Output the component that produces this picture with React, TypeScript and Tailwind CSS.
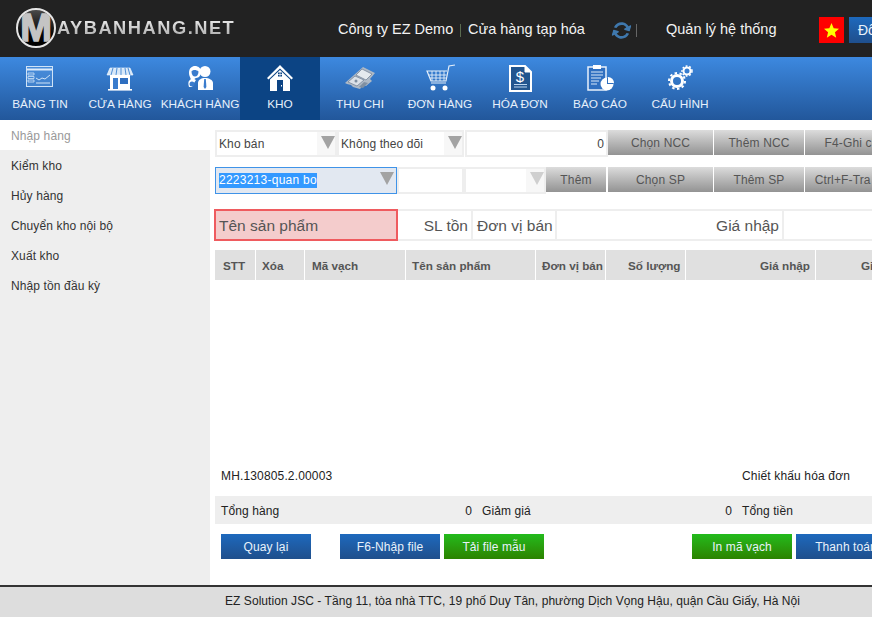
import React from "react";
import { FaSyncAlt } from "react-icons/fa";

const ic = "w-[32px] h-[28px]";

const Board = () => (
  <svg viewBox="0 0 32 28" className={ic} fill="none" stroke="#cfe3f7">
    <rect x="2.5" y="2.5" width="26" height="20" strokeWidth="1" fill="#5d9be0" fillOpacity=".4" />
    <path d="M3 5.5h25" strokeWidth="2" stroke="#dcebfa" />
    <path d="M4 9h6v2H4zM4 12.5h6v2H4zM4 16h6v2H4z" strokeWidth=".8" />
    <path d="M12 14l3 2 3-2 3 1 5-4" strokeWidth="1" />
    <path d="M12 19h14" strokeWidth="1" />
  </svg>
);
const Shop = () => (
  <svg viewBox="0 0 32 28" className={ic} fill="none">
    <path d="M6 4h20l3 7H3z" fill="#d8e8f8" stroke="#fff" strokeWidth=".6" />
    <path d="M9 4l-2 7M13 4l-1 7M17 4v7M21 4l1 7M24 4l2 7" stroke="#4f8fd6" strokeWidth="1" />
    <path d="M6 11h20v14H6z" fill="#fff" />
    <rect x="9" y="14" width="5" height="11" fill="#3a7ccd" />
    <rect x="16" y="14" width="8" height="6" fill="#2f6fc0" />
    <path d="M4 25h24v1.600H4z" fill="#fff" />
  </svg>
);
const Customers = () => (
  <svg viewBox="0 0 32 28" className={ic} fill="#fff">
    <circle cx="21" cy="7.5" r="5.500" />
    <path d="M14 26v-7c0-3 3-5 7-5s8 2 8 5v7z" />
    <path d="M20.200 15h1.600l.6 8-1.400 2-1.400-2z" fill="#3a7ccd" />
    <path d="M5 9c0-5 3-7 6-7s6 2 6 6c0 3-2 6-5 6-2 1-2 1 0 2l-2 3-2 4H5c-1-3-1-6 1-7 2-1-1-3-1-7z" />
    <path d="M7.500 7.500c1-2 5-2 7 0 0 3-1.500 5-3.500 5s-3.500-2-3.500-5z" fill="#3a7ccd" />
    <circle cx="8" cy="20" r="2.500" fill="#3a7ccd" />
  </svg>
);
const House = () => (
  <svg viewBox="0 0 32 28" className={ic} fill="#fff">
    <path d="M16 1L3 14l1.500 1.500L16 4.500l11.500 11L29 14z" />
    <path d="M6 15.500L16 6l10 9.500V27H6z" />
    <rect x="14" y="8.500" width="4" height="4" fill="#0c4484" />
    <path d="M16 8.500v4M14 10.500h4" stroke="#fff" strokeWidth=".7" />
    <rect x="13" y="16" width="6" height="11" fill="#0c4484" />
    <rect x="17" y="21" width="1" height="1.500" fill="#fff" />
  </svg>
);
const Money = () => (
  <svg viewBox="0 0 32 28" className={ic}>
    <path d="M1 19L19 3l12 6-5 6 2 2-6 5-3-1-3 4-7-2-2-2-4-1z" fill="#aeb9c6" />
    <path d="M18 5l10 5-6 6-10-5z" fill="#e4e9ee" stroke="#77879a" strokeWidth=".8" />
    <path d="M4 18l7-6 9 4-7 6z" fill="#dbe1e8" stroke="#77879a" strokeWidth=".8" />
    <path d="M15 23l5-5 4 1-5 5z" fill="#7f8fa1" />
    <circle cx="12" cy="17" r="1.500" fill="#7f8fa1" />
  </svg>
);
const Cart = () => (
  <svg viewBox="0 0 32 28" className={ic} fill="none" stroke="#e4effa">
    <path d="M31 1l-6 1-3 15H7L3 7h20" strokeWidth="1.200" />
    <path d="M4.500 11h18M6 14h16M8 7v10M12 7v10M16 7v10M20 7v10" strokeWidth=".9" />
    <path d="M7 19h15" strokeWidth="1" />
    <circle cx="9" cy="24" r="2.500" fill="#fff" stroke="none" />
    <circle cx="21" cy="24" r="2.500" fill="#fff" stroke="none" />
  </svg>
);
const Invoice = () => (
  <svg viewBox="0 0 32 28" className={ic} fill="none">
    <path d="M6 2h15l6 6v19H6z" fill="#21558f" stroke="#fff" strokeWidth="2" />
    <path d="M21 2v6h6" fill="#fff" stroke="#fff" strokeWidth="1" />
    <text x="16" y="18" textAnchor="middle" fontSize="15" fontFamily="Liberation Sans" fill="#fff">$</text>
    <path d="M10 20.500h13M10 23h13" stroke="#bcd6f0" strokeWidth="1" />
  </svg>
);
const Report = () => (
  <svg viewBox="0 0 32 28" className={ic} fill="none">
    <rect x="4" y="3" width="18" height="23" fill="#2f6fc0" stroke="#e8f1fb" strokeWidth="1.500" />
    <rect x="9" y="1" width="8" height="4" fill="#fff" />
    <path d="M7 8h12M7 11h12M7 14h10M7 17h8M7 20h6" stroke="#d8e8f8" strokeWidth="1.100" />
    <circle cx="23" cy="20" r="6.500" fill="#fff" />
    <path d="M23 20v-6.500a6.500 6.500 0 0 1 6.500 6.500z" fill="#2f6fc0" />
    <path d="M24 19v-6a6 6 0 0 1 6 6z" fill="#fff" />
  </svg>
);
const Gears = () => (
  <svg viewBox="0 0 32 28" className={ic} fill="none" stroke="#fff">
    <circle cx="13" cy="17" r="5.500" strokeWidth="3" />
    <circle cx="13" cy="17" r="8" strokeWidth="2" strokeDasharray="2.500 2.500" />
    <circle cx="23" cy="7" r="3.500" strokeWidth="2" />
    <circle cx="23" cy="7" r="5" strokeWidth="1.500" strokeDasharray="1.800 1.800" />
  </svg>
);

const NAV: [string, React.ComponentType, boolean?][] = [
  ["BẢNG TIN", Board],
  ["CỬA HÀNG", Shop],
  ["KHÁCH HÀNG", Customers],
  ["KHO", House, true],
  ["THU CHI", Money],
  ["ĐƠN HÀNG", Cart],
  ["HÓA ĐƠN", Invoice],
  ["BÁO CÁO", Report],
  ["CẤU HÌNH", Gears],
];

const SIDE = ["Kiểm kho", "Hủy hàng", "Chuyển kho nội bộ", "Xuất kho", "Nhập tồn đầu kỳ"];

const Arrow = ({ light }: { light?: boolean }) => (
  <svg viewBox="0 0 14 13" className="w-[14px] h-[13px]">
    <path d="M0 0h14L7 13z" fill={light ? "#cfcfcf" : "#a3a3a3"} />
  </svg>
);

const Select = ({ label, w, light }: { label?: string; w: string; light?: boolean }) => (
  <div className={`${w} h-[27px] shrink-0 flex items-center justify-between border-2 border-[#eeeeee] bg-white pl-[2px] text-[12px] tracking-[0.1px] text-[#444]`}>
    <span>{label}</span>
    <span className={`h-full w-[18px] flex justify-end ${light ? "pt-[3px]" : "pt-[4px]"} bg-[#f7f7f7]`}>
      <Arrow light={light} />
    </span>
  </div>
);

const GrayBtn = ({ label, w }: { label: string; w: string }) => (
  <div className={`${w} h-[25px] shrink-0 flex items-center justify-center overflow-hidden whitespace-nowrap text-[12px] tracking-[0.15px] text-[#555] bg-gradient-to-b from-[#dcdcdc] to-[#939393]`}>
    {label}
  </div>
);

const ActionBtn = ({ label, w, green }: { label: string; w: string; green?: boolean }) => (
  <div
    className={`${w} h-[25px] shrink-0 flex items-center justify-center whitespace-nowrap text-[12px] tracking-[0.1px] text-[#e8f2fb] bg-gradient-to-b ${
      green ? "from-[#22bb1c] to-[#2b8300]" : "from-[#1d69bd] to-[#1f4f8c]"
    }`}
  >
    {label}
  </div>
);

const TH = ({ label, w, right, pl }: { label: string; w: string; right?: boolean; pl?: string }) => (
  <div className={`${w} h-[30px] shrink-0 overflow-hidden whitespace-nowrap flex items-center pt-[1px] bg-[#e0e0e0] text-[11.700px] font-bold text-[#555] ${right ? "justify-end pr-[5px]" : pl ?? "pl-[6px]"}`}>
    {label}
  </div>
);

const Cap = ({ label, w, right }: { label: string; w: string; right?: boolean }) => (
  <div className={`${w} h-[32px] shrink-0 whitespace-nowrap overflow-hidden flex items-center pt-[1px] border-y-2 border-r-2 border-[#eeeeee] text-[15.500px] text-[#555] ${right ? "justify-end pr-[3px]" : "pl-[4px]"}`}>
    {label}
  </div>
);

export default function App() {
  return (
    <div className="w-[872px] h-[617px] overflow-hidden flex flex-col bg-white font-['Liberation_Sans',Arial,sans-serif]">
      <header className="h-[57px] shrink-0 bg-[#222222] flex items-center text-[#f2f2f2] text-[14.500px] whitespace-nowrap">
        <div className="ml-[16px] -mt-[2px] w-[40px] h-[40px] shrink-0 rounded-full border-2 border-[#e5e5e5] bg-gradient-to-b from-[#4a4a4a] to-black flex items-center justify-center overflow-hidden">
          <span className="text-[38px] leading-none font-bold text-[#c4c4c4] [-webkit-text-stroke:1.500px_#c4c4c4]">M</span>
        </div>
        <span className="w-[282px] shrink-0 pl-[1px] -mt-[1px] text-[18.300px] font-bold tracking-[1.500px] text-transparent bg-clip-text bg-gradient-to-b from-white to-[#9a9a9a]">
          AYBANHANG.NET
        </span>
        <span className="w-[122px] shrink-0 pt-[2px]">Công ty EZ Demo</span>
        <span className="w-[8px] shrink-0 h-[13px] mt-[3px] border-l border-[#5a6b50]" />
        <span className="w-[145px] shrink-0 pt-[2px]">Cửa hàng tạp hóa</span>
        <FaSyncAlt className="w-[17px] h-[21px] mt-[4px] shrink-0 text-[#3f78ad] rotate-[15deg]" />
        <span className="ml-[6px] w-[30px] shrink-0 h-[13px] mt-[3px] border-l border-[#666]" />
        <span className="w-[153px] shrink-0 pt-[2px]">Quản lý hệ thống</span>
        <div className="w-[25px] h-[26px] mt-[3px] shrink-0 bg-[#ff0000] flex items-center justify-center">
          <svg viewBox="0 0 24 24" className="w-[15px] h-[15px]">
            <path d="M12 0l3.500 8.300 8.500.7-6.500 5.700 2 8.800L12 18.800 4.500 23.500l2-8.800L0 9l8.500-.7z" fill="#ffff00" />
          </svg>
        </div>
        <div className="ml-[5px] w-[60px] h-[26px] mt-[3px] shrink-0 pl-[9px] flex items-center text-[14px] text-[#e8f2fb] bg-gradient-to-b from-[#1d69bd] to-[#1f4f8c]">
          Đổi mật khẩu
        </div>
      </header>

      <nav className="h-[63px] shrink-0 flex bg-gradient-to-b from-[#3d89e0] to-[#22579b]">
        {NAV.map(([label, Icon, active]) => (
          <div
            key={label}
            className={`w-[80px] shrink-0 flex flex-col items-center pt-[7px] whitespace-nowrap text-[11.800px] text-[#e6f0fb] ${active ? "bg-[#0c4484]" : ""}`}
          >
            <Icon />
            <span className="mt-[5px] leading-[15px]">{label}</span>
          </div>
        ))}
      </nav>

      <div className="flex-1 flex min-h-0">
        <aside className="w-[210px] shrink-0 bg-[#eeeeee] text-[12px] tracking-[0.12px] text-[#333]">
          <div className="h-[30px] flex items-center pl-[11px] pt-[2px] bg-white text-[#999]">Nhập hàng</div>
          {SIDE.map((s) => (
            <div key={s} className="h-[30px] flex items-center pl-[11px] pt-[2px]">{s}</div>
          ))}
        </aside>

        <main className="flex-1 min-w-0 flex flex-col">
          <div className="flex mt-[10px] ml-[5px] h-[27px]">
            <Select label="Kho bán" w="w-[122px]" />
            <Select label="Không theo dõi" w="w-[127px]" />
            <div className="w-[143px] h-[27px] shrink-0 ml-[1px] flex items-center justify-end pr-[2px] border-2 border-[#eeeeee] text-[12px] text-[#444]">0</div>
            <GrayBtn label="Chọn NCC" w="w-[105px]" />
            <GrayBtn label="Thêm NCC" w="w-[90px] ml-[1px]" />
            <GrayBtn label="F4-Ghi chú" w="w-[100px] ml-[1px]" />
          </div>

          <div className="flex mt-[10px] ml-[5px] h-[27px]">
            <div className="w-[182px] h-[27px] shrink-0 flex items-start justify-between border border-[#3f93e8] bg-[#e2e8f1] pl-[3px] text-[12px] tracking-[0.25px]">
              <span className="mt-[5px] bg-[#3399ff] text-white leading-[15px]">2223213-quan bo</span>
              <span className="pt-[4px] pr-[2px]"><Arrow /></span>
            </div>
            <div className="w-[67px] h-[27px] shrink-0 border-2 border-[#eeeeee]" />
            <Select w="w-[82px]" light />
            <GrayBtn label="Thêm" w="w-[60px]" />
            <GrayBtn label="Chọn SP" w="w-[105px] ml-[2px]" />
            <GrayBtn label="Thêm SP" w="w-[90px] ml-[1px]" />
            <GrayBtn label="Ctrl+F-Tra cứu" w="w-[100px] ml-[1px]" />
          </div>

          <div className="flex mt-[15px] ml-[4px] h-[32px]">
            <div className="w-[184px] h-[32px] shrink-0 flex items-center pt-[1px] border-2 border-[#ef5b5f] bg-[#f4cccc] pl-[3px] text-[15.500px] text-[#555]">Tên sản phẩm</div>
            <Cap label="SL tồn" w="w-[75px]" right />
            <Cap label="Đơn vị bán" w="w-[84px]" />
            <Cap label="Giá nhập" w="w-[227px]" right />
            <Cap label="" w="w-[120px]" />
          </div>

          <div className="flex mt-[9px] ml-[5px] gap-[1px]">
            <TH label="STT" w="w-[40px]" pl="pl-[8px]" />
            <TH label="Xóa" w="w-[48px]" />
            <TH label="Mã vạch" w="w-[100px]" pl="pl-[7px]" />
            <TH label="Tên sản phẩm" w="w-[129px]" />
            <TH label="Đơn vị bán" w="w-[69px]" />
            <TH label="Số lượng" w="w-[79px]" pl="pl-[22px]" />
            <TH label="Giá nhập" w="w-[129px]" right />
            <TH label="Giá bán" w="w-[129px]" pl="pl-[45px]" />
          </div>

          <div className="flex-1" />

          <div className="flex h-[16px] items-center ml-[11px] text-[12px] tracking-[0.15px] text-[#222] whitespace-nowrap">
            <span className="w-[521px] shrink-0">MH.130805.2.00003</span>
            <span>Chiết khấu hóa đơn</span>
          </div>

          <div className="flex h-[28px] mt-[12px] ml-[5px] items-center pt-[1px] bg-[#eeeeee] text-[12px] tracking-[0.1px] text-[#222] whitespace-nowrap">
            <span className="w-[257px] shrink-0 pl-[6px] flex justify-between"><span>Tổng hàng</span><span>0</span></span>
            <span className="w-[250px] shrink-0 ml-[10px] flex justify-between"><span>Giảm giá</span><span>0</span></span>
            <span className="ml-[10px]">Tổng tiền</span>
          </div>

          <div className="flex mt-[10px] mb-[26px] ml-[11px]">
            <ActionBtn label="Quay lại" w="w-[90px]" />
            <ActionBtn label="F6-Nhập file" w="w-[100px] ml-[29px]" />
            <ActionBtn label="Tải file mẫu" w="w-[100px] ml-[4px]" green />
            <ActionBtn label="In mã vạch" w="w-[100px] ml-[148px]" green />
            <ActionBtn label="Thanh toán" w="w-[100px] ml-[4px]" />
          </div>
        </main>
      </div>

      <footer className="h-[32px] shrink-0 border-t-2 border-[#333333] bg-[#dddddd] flex items-start pt-[5px] pl-[225px] text-[12px] tracking-[0.06px] text-[#222] whitespace-nowrap">
        <span>EZ Solution JSC - Tầng 11, tòa nhà TTC, 19 phố Duy Tân, phường Dịch Vọng Hậu, quận Cầu Giấy, Hà Nội</span>
      </footer>
    </div>
  );
}
